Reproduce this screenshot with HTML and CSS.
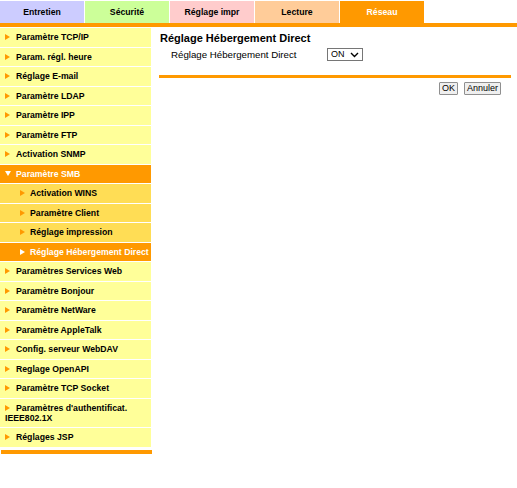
FILE: index.html
```html
<!DOCTYPE html>
<html lang="fr">
<head>
  <meta charset="UTF-8">
  <title>Réseau — Réglage Hébergement Direct</title>
  <link rel="stylesheet" href="styles.css">
</head>
<body>

<div class="tabs">
  <div class="tab tab-maint">Entretien</div>
  <div class="tab tab-secu">Sécurité</div>
  <div class="tab tab-print">Réglage impr</div>
  <div class="tab tab-read">Lecture</div>
  <div class="tab tab-net active">Réseau</div>
</div>
<div class="tabbar"></div>

<div class="layout">
  <div class="side">
    <ul class="menu">
      <li class="item"><span class="arr"></span>Paramètre TCP/IP</li>
      <li class="item"><span class="arr"></span>Param. régl. heure</li>
      <li class="item"><span class="arr"></span>Réglage E-mail</li>
      <li class="item"><span class="arr"></span>Paramètre LDAP</li>
      <li class="item"><span class="arr"></span>Paramètre IPP</li>
      <li class="item"><span class="arr"></span>Paramètre FTP</li>
      <li class="item"><span class="arr"></span>Activation SNMP</li>
      <li class="item open"><span class="arr-down"></span>Paramètre SMB</li>
      <li class="item sub"><span class="arr"></span>Activation WINS</li>
      <li class="item sub"><span class="arr"></span>Paramètre Client</li>
      <li class="item sub"><span class="arr"></span>Réglage impression</li>
      <li class="item sub current"><span class="arr"></span>Réglage Hébergement Direct</li>
      <li class="item"><span class="arr"></span>Paramètres Services Web</li>
      <li class="item"><span class="arr"></span>Paramètre Bonjour</li>
      <li class="item"><span class="arr"></span>Paramètre NetWare</li>
      <li class="item"><span class="arr"></span>Paramètre AppleTalk</li>
      <li class="item"><span class="arr"></span>Config. serveur WebDAV</li>
      <li class="item"><span class="arr"></span>Reglage OpenAPI</li>
      <li class="item"><span class="arr"></span>Paramètre TCP Socket</li>
      <li class="item"><span class="arr"></span>Paramètres d'authentificat. IEEE802.1X</li>
      <li class="item"><span class="arr"></span>Réglages JSP</li>
    </ul>
    <div class="side-end"></div>
  </div>

  <div class="main">
    <h1 class="title">Réglage Hébergement Direct</h1>
    <div class="row">
      <span class="label">Réglage Hébergement Direct</span>
      <span class="select-wrap">
        <select class="select">
          <option>ON</option>
          <option>OFF</option>
        </select>
        <svg class="chev" width="9" height="6" viewBox="0 0 9 6"><path d="M1 1 L4.5 4.5 L8 1" fill="none" stroke="#000" stroke-width="1.4"/></svg>
      </span>
    </div>
    <div class="main-end"></div>
    <div class="buttons">
      <button type="button" class="btn">OK</button>
      <button type="button" class="btn">Annuler</button>
    </div>
  </div>
</div>

</body>
</html>
```

FILE: styles.css
```css
body {
  margin: 0;
  font-family: "Liberation Sans", Arial, sans-serif;
  background: #fff;
  color: #000;
}

/* onglets */
.tabs {
  display: flex;
  padding-top: 1px;
}
.tab {
  width: 84px;
  height: 22px;
  line-height: 22px;
  border-right: 1px solid #fff;
  text-align: center;
  font-size: 8.7px;
  font-weight: bold;
  color: #000;
}
.tab-maint { background: #ccccff; }
.tab-secu { background: #ccff99; }
.tab-print { background: #ffcccc; }
.tab-read { background: #ffcc99; }
.tab-net { background: #ff9900; }
.tab.active {
  color: #fff;
}
.tabbar {
  height: 4px;
  background: #ff9900;
}

.layout {
  display: flex;
  align-items: flex-start;
}

/* menu gauche */
.side {
  width: 152px;
  flex-shrink: 0;
}
.menu {
  list-style: none;
  margin: 0;
  padding: 0;
}
.item {
  width: 151px;
  box-sizing: border-box;
  background: #ffff99;
  border-top: 1px solid #fff;
  padding: 4.25px 2px 4.25px 5px;
  font-size: 8.7px;
  line-height: 10px;
  font-weight: bold;
}
.item.sub {
  background: #ffdd55;
  padding-left: 20px;
  padding-right: 0;
  white-space: nowrap;
}
.item.sub .arr {
  margin-right: 5px;
}
.item.open,
.item.current {
  background: #ff9900;
  color: #fff;
}
.arr {
  display: inline-block;
  width: 0;
  height: 0;
  border-left: 5px solid #ff9900;
  border-top: 3px solid transparent;
  border-bottom: 3px solid transparent;
  margin-right: 6px;
  vertical-align: 0;
}
.item.current .arr {
  border-left-color: #fff;
}
.arr-down {
  display: inline-block;
  width: 0;
  height: 0;
  border-top: 5px solid #fff;
  border-left: 3px solid transparent;
  border-right: 3px solid transparent;
  margin-right: 5px;
  vertical-align: 1px;
}
.side-end {
  margin-top: 3px;
  margin-left: 1px;
  height: 4px;
  background: #ff9900;
}

/* contenu */
.main {
  flex: 1;
  margin-left: 7px;
  margin-right: 6px;
  padding-top: 5px;
}
.title {
  margin: 0;
  padding-left: 1px;
  font-size: 11px;
  line-height: 13px;
  font-weight: bold;
}
.row {
  display: flex;
  align-items: center;
  height: 19px;
  padding-left: 12px;
}
.label {
  width: 156px;
  font-size: 9.7px;
}
.select-wrap {
  position: relative;
  display: flex;
}
.select {
  appearance: none;
  -webkit-appearance: none;
  width: 36px;
  height: 13px;
  margin: 0;
  padding: 0 0 0 3px;
  border: 1px solid #767676;
  border-radius: 0;
  background: #fff;
  font-family: "Liberation Sans", Arial, sans-serif;
  font-size: 9px;
  line-height: 11px;
  color: #000;
}
.chev {
  display: block;
  position: absolute;
  right: 4px;
  top: 4px;
  pointer-events: none;
}
.main-end {
  margin-top: 11px;
  height: 3px;
  background: #ff9900;
}
.buttons {
  display: flex;
  justify-content: flex-end;
  gap: 6px;
  margin-top: 4px;
  padding-right: 10px;
}
.btn {
  height: 13px;
  padding: 0 2px;
  border: 1px solid #8f8f8f;
  border-radius: 1px;
  background: #efefef;
  font-family: "Liberation Sans", Arial, sans-serif;
  font-size: 9px;
  line-height: 11px;
  color: #000;
}
```
